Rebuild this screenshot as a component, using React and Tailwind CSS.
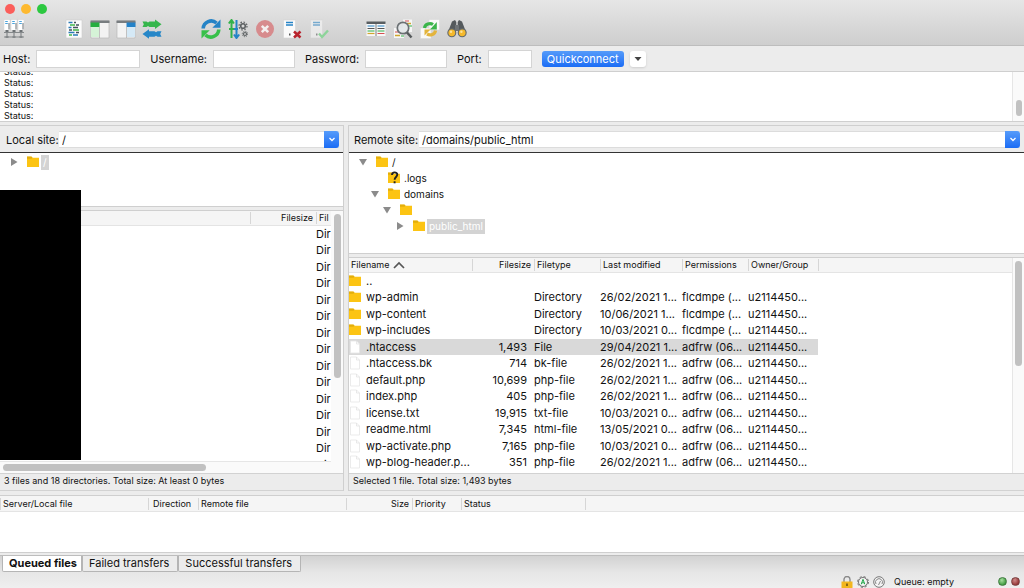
import React, { useState } from 'react';
import clsx from 'clsx';

const remoteFiles = [
  { name: '..', dir: true, size: '', type: '', modified: '', perms: '', owner: '' },
  { name: 'wp-admin', dir: true, size: '', type: 'Directory', modified: '26/02/2021 1...', perms: 'flcdmpe (...', owner: 'u2114450...' },
  { name: 'wp-content', dir: true, size: '', type: 'Directory', modified: '10/06/2021 1...', perms: 'flcdmpe (...', owner: 'u2114450...' },
  { name: 'wp-includes', dir: true, size: '', type: 'Directory', modified: '10/03/2021 0...', perms: 'flcdmpe (...', owner: 'u2114450...' },
  { name: '.htaccess', size: '1,493', type: 'File', modified: '29/04/2021 1...', perms: 'adfrw (06...', owner: 'u2114450...' },
  { name: '.htaccess.bk', size: '714', type: 'bk-file', modified: '26/02/2021 1...', perms: 'adfrw (06...', owner: 'u2114450...' },
  { name: 'default.php', size: '10,699', type: 'php-file', modified: '26/02/2021 1...', perms: 'adfrw (06...', owner: 'u2114450...' },
  { name: 'index.php', size: '405', type: 'php-file', modified: '26/02/2021 1...', perms: 'adfrw (06...', owner: 'u2114450...' },
  { name: 'license.txt', size: '19,915', type: 'txt-file', modified: '10/03/2021 0...', perms: 'adfrw (06...', owner: 'u2114450...' },
  { name: 'readme.html', size: '7,345', type: 'html-file', modified: '13/05/2021 0...', perms: 'adfrw (06...', owner: 'u2114450...' },
  { name: 'wp-activate.php', size: '7,165', type: 'php-file', modified: '10/03/2021 0...', perms: 'adfrw (06...', owner: 'u2114450...' },
  { name: 'wp-blog-header.p...', size: '351', type: 'php-file', modified: '26/02/2021 1...', perms: 'adfrw (06...', owner: 'u2114450...' },
];

const localRows = Array.from({ length: 15 }, (_, i) => i);

// --- Icons ---
const Icon = ({ children, className = 'size-5' }) => (
  <svg viewBox="0 0 20 20" className={clsx('block shrink-0', className)} fill="none" aria-hidden="true">
    {children}
  </svg>
);

const SiteManagerIcon = () => (
  <Icon>
    {[0, 7, 14].map((x) => (
      <g key={x}>
        <path d={`M${x} .5h6v11h-6z`} fill="#fff" stroke="#c8c8c8" strokeWidth=".4" />
        <path d={`M${x + 1.2} 2.500h2.600M${x + 1.2} 4.500h2.600`} stroke="#4aa3dc" strokeWidth="1.100" />
        <path d={`M${x + 5} 4v6.500`} stroke="#5c6266" strokeWidth=".9" />
        <path d={`M${x + 1.5} 11h3v2.500h-3z`} fill="#6d7275" />
      </g>
    ))}
    <path d="M0 13.500h20M0 18h20" stroke="#85898b" strokeWidth="1" />
    <path d="M3 13.500V18M10 13.500V18M17 13.500V18" stroke="#85898b" strokeWidth="1.200" />
    <path d="M1.500 17h3v2h-3zM8.500 17h3v2h-3zM15.500 17h3v2h-3z" fill="#85898b" />
  </Icon>
);

const LogIcon = () => (
  <Icon>
    <path d="M2 1h16v18H2z" fill="#fbfbfb" stroke="#cfcfcf" strokeWidth=".6" />
    <path d="M4.500 3.500h4M4.500 8.500h3M4.500 13.500h6M9 16h5" stroke="#2b7cb8" strokeWidth="1.300" />
    <path d="M6 6h5M9 11h6M5 16h3" stroke="#41b649" strokeWidth="1.300" />
    <path d="M10 3.500h2M12 6h3M9 8.500h5M5 11h3M12 13.500h3" stroke="#44525c" strokeWidth="1.300" />
  </Icon>
);

const TreeIcon = ({ remote }) => (
  <Icon>
    <path d="M1 2h18v17H1z" fill="#f3f3f3" stroke="#b9b9b9" strokeWidth=".7" />
    <path d="M.5 1.500h19v2.500H.5z" fill="#787d80" />
    {remote ? (
      <>
        <path d="M11 7h8v11h-8z" fill="#d5e9f6" />
        <path d="M10.500 3.500h9v4.500h-9z" fill="#2482c8" />
        <path d="M10.500 8v11" stroke="#aaa" strokeWidth=".7" />
      </>
    ) : (
      <>
        <path d="M1 7h8v11H1z" fill="#d5f3d7" />
        <path d="M.5 3.500h9v4.500h-9z" fill="#25ad3f" />
        <path d="M9.500 8v11" stroke="#aaa" strokeWidth=".7" />
      </>
    )}
  </Icon>
);

const TransferIcon = () => (
  <Icon>
    <path d="M.5 2.500h4l1.500 1 1.500-1h5.500V.5l6.500 4.700L13 10V8H7.500L6 7 4.500 8h-4l1.300-2.700z" fill="#36b64c" />
    <path d="M19.500 12.300h-4l-1.500 1-1.500-1H7v-2L.5 15 7 19.800v-2h5.500l1.500-1 1.500 1h4L18.200 15z" fill="#2787c8" />
  </Icon>
);

const RefreshIcon = () => (
  <Icon>
    <path d="M2.200 9.500A8 8 0 0 1 15.500 4" stroke="#2583c6" strokeWidth="3.600" />
    <path d="M19.500.5v8.200h-8.200z" fill="#2583c6" />
    <path d="M17.800 10.500A8 8 0 0 1 4.500 16" stroke="#38c04a" strokeWidth="3.600" />
    <path d="M.5 19.500v-8.200h8.200z" fill="#38c04a" />
  </Icon>
);

const ProcessIcon = () => (
  <Icon>
    <path d="M3.500 1v18M.8 4.500 3.500 1l2.400 3.500M1 10h5" stroke="#33b24a" strokeWidth="2" />
    <path d="M8.500 1v18M6 15.500 8.500 19l2.700-3.500M6 10h4" stroke="#2583c6" strokeWidth="2" />
    <circle cx="15" cy="7" r="2.300" stroke="#5d6163" strokeWidth="1.600" />
    <circle cx="15" cy="7" r="4" stroke="#5d6163" strokeWidth="1.200" strokeDasharray="1.600 1.540" />
    <circle cx="17" cy="15" r="1.500" stroke="#5d6163" strokeWidth="1.200" />
    <circle cx="17" cy="15" r="2.700" stroke="#5d6163" strokeWidth="1" strokeDasharray="1.100 1.020" />
  </Icon>
);

const CancelIcon = () => (
  <Icon>
    <circle cx="10" cy="10" r="9" fill="#d78b8d" />
    <path d="m6.800 6.800 6.400 6.400m0-6.400-6.400 6.400" stroke="#f3eeee" strokeWidth="2.600" />
  </Icon>
);

const ServerIcon = ({ ok }) => (
  <Icon>
    <g opacity={ok ? 0.55 : 1}>
      <path d="M1.500 1h12v18h-12z" fill="#fafafa" stroke="#d5d5d5" strokeWidth=".6" />
      <path d="M4 3.500h7M4 6h7" stroke="#2583c6" strokeWidth="1.300" />
      <path d="M7 14.500h1.500v2H7z" fill="#555" />
    </g>
    {ok ? (
      <path d="m10 14.500 3 3.500 6-6.500" stroke="#8dd49a" strokeWidth="2.400" />
    ) : (
      <path d="m12 12.500 6.500 6m0-6-6.500 6" stroke="#b8222c" strokeWidth="2.500" />
    )}
  </Icon>
);

const FilterIcon = () => (
  <Icon>
    <path d="M.5 4h19v13H.5z" fill="#f8f8f8" />
    <path d="M.5 2.500h19V5H.5z" fill="#595e61" />
    <path d="M1.500 7h7M11.500 7h7" stroke="#2583c6" strokeWidth="1" />
    <path d="M1.500 9.500h7M11.500 9.500h7" stroke="#555" strokeWidth="1" />
    <path d="M1.500 12h7M11.500 12h7" stroke="#33b24a" strokeWidth="1.200" />
    <path d="M1.500 14.500h7" stroke="#d0a72d" strokeWidth="1.200" />
    <path d="M11.500 14.500h7" stroke="#d85050" strokeWidth="1" />
    <path d="M10 4v13" stroke="#595e61" strokeWidth=".8" />
  </Icon>
);

const CompareIcon = () => (
  <Icon>
    <path d="M10 .5h9V13h-9zM1 9h10v10H1z" fill="#f6f6f6" />
    <path d="M12 2h4M2 13h4" stroke="#d85050" strokeWidth="1.200" />
    <path d="M14 4.500h4M2 16.500h5" stroke="#d0a72d" strokeWidth="1.400" />
    <path d="M16 7h3M8 17h3" stroke="#33b24a" strokeWidth="1.200" />
    <circle cx="10" cy="9" r="5.700" fill="#e3e7e9" fillOpacity=".9" stroke="#6b7073" strokeWidth="1.700" />
    <path d="m14 13.500 4.500 5" stroke="#55595b" strokeWidth="2.500" />
  </Icon>
);

const SyncIcon = () => (
  <Icon>
    <path d="M9 .5h10.500V11H9zM.5 9H11v10.500H.5z" fill="#f9f9f9" stroke="#d6d6d6" strokeWidth=".5" />
    <path d="M4.500 9C5 5 10 3.500 13 5.500" stroke="#3bb54a" strokeWidth="3.200" />
    <path d="M16.800 3v7.500H10z" fill="#3bb54a" />
    <path d="M15.500 11.500c-.5 4-5 5.500-8.500 3.500" stroke="#e3b43c" strokeWidth="3.200" />
    <path d="M4.500 16.500V10.500h6z" fill="#e3b43c" />
  </Icon>
);

const FindIcon = () => (
  <Icon>
    <path d="M5 2.500 8 1l1.300 2v8L1 13zM15 2.500 12 1l-1.300 2v8l8.300 2z" fill="#54595c" />
    <path d="M8 6h4v6H8z" fill="#6e7376" />
    <circle cx="4.800" cy="13.800" r="4.500" fill="#63686b" />
    <circle cx="15.200" cy="13.800" r="4.500" fill="#63686b" />
    <circle cx="4.800" cy="13.800" r="3.400" fill="#f5b92c" />
    <circle cx="15.200" cy="13.800" r="3.400" fill="#f5b92c" />
    <circle cx="4" cy="12.800" r="1.200" fill="#fde29a" />
    <circle cx="14.400" cy="12.800" r="1.200" fill="#fde29a" />
  </Icon>
);

const FolderIcon = ({ question }) => (
  <svg viewBox="0 0 12 12" className="block size-3 shrink-0 overflow-visible" aria-hidden="true">
    <path d="M0 .8h4.500l1 1H12V11H0z" fill="#fcc413" />
    <path d="M0 .5h4.500l1 1.300-1 .9H0z" fill="#e3ae0c" />
    {question && (
      <g fill="none" stroke="#222" strokeWidth="1.900">
        <path d="M4 3C4-.4 9.300-.4 9.300 2.600 9.300 5 6.600 5 6.600 7.800" />
        <path d="M6.600 9.300v2" />
      </g>
    )}
  </svg>
);

const FileIcon = () => (
  <svg viewBox="0 0 12 14" className="block h-3.5 w-3 shrink-0" aria-hidden="true">
    <path d="M1.500 1h6l3 3v9h-9z" fill="#fff" stroke="#e6e6e6" strokeWidth=".8" />
    <path d="M7.500 1v3h3" fill="none" stroke="#e0e0e0" strokeWidth=".7" />
  </svg>
);

const Triangle = ({ open }) => (
  <svg viewBox="0 0 8 8" className="block size-2 shrink-0" aria-hidden="true">
    <path d={open ? 'M0 1h8L4 7.500z' : 'M1 0v8l6.500-4z'} fill="#8b8b8b" />
  </svg>
);

// --- Toolbar ---
const toolGroups = [
  {
    className: 'ml-[34px]',
    width: 'w-[26px]',
    tools: [
      ['Toggle message log', <LogIcon />],
      ['Toggle local tree', <TreeIcon />],
      ['Toggle remote tree', <TreeIcon remote />],
      ['Toggle transfer queue', <TransferIcon />],
    ],
  },
  {
    className: 'ml-8',
    width: 'w-[27px]',
    tools: [
      ['Refresh', <RefreshIcon />],
      ['Process queue', <ProcessIcon />],
      ['Cancel', <CancelIcon />],
      ['Disconnect', <ServerIcon />],
      ['Reconnect', <ServerIcon ok />],
    ],
  },
  {
    className: 'ml-[30px]',
    width: 'w-[27px]',
    tools: [
      ['Filter', <FilterIcon />],
      ['Compare directories', <CompareIcon />],
      ['Synchronized browsing', <SyncIcon />],
      ['Find files', <FindIcon />],
    ],
  },
];

const Toolbar = () => (
  <header className="shrink-0 h-[46px] bg-linear-to-b from-[#e6e6e6] to-[#cecece] border-b border-[#bdbdbd]">
    <div className="flex h-[17px] items-center gap-1.5 pl-[5px]">
      <button aria-label="Close" className="size-2.5 rounded-full bg-[#fb5e5b]" />
      <button aria-label="Minimize" className="size-2.5 rounded-full bg-[#fdb930]" />
      <button aria-label="Zoom" className="size-2.5 rounded-full bg-[#2cc840]" />
    </div>
    <div className="flex h-6 items-center">
      <button aria-label="Site manager" className="flex w-[26px] justify-center ml-px">
        <SiteManagerIcon />
      </button>
      {toolGroups.map((group) => (
        <div key={group.className} className={clsx('flex', group.className)}>
          {group.tools.map(([label, icon]) => (
            <button key={label} aria-label={label} className={clsx('flex justify-center', group.width)}>
              {icon}
            </button>
          ))}
        </div>
      ))}
    </div>
  </header>
);

const QuickField = ({ id, label, type = 'text', width }) => (
  <div className="flex items-center">
    <label htmlFor={id}>{label}</label>
    <input id={id} type={type} className={clsx('ml-1.5 h-[18px] bg-white border border-[#d4d4d4] px-1 outline-none', width)} />
  </div>
);

const QuickConnect = () => (
  <form className="flex shrink-0 h-[26px] items-center gap-2.5 bg-[#ececec] border-b border-[#cfcfcf] pl-[3px]" onSubmit={(e) => e.preventDefault()}>
    <QuickField id="host" label="Host:" width="w-[104px]" />
    <QuickField id="user" label="Username:" width="w-[82px]" />
    <QuickField id="pass" label="Password:" type="password" width="w-[82px]" />
    <QuickField id="port" label="Port:" width="w-11" />
    <div className="flex items-center gap-1.5">
      <button className="h-4 w-[82px] rounded-[3px] bg-linear-to-b from-[#559bfa] to-[#1a6cf5] text-white">
        Quickconnect
      </button>
      <button aria-label="Recent servers" className="flex size-4 items-center justify-center rounded-[3px] bg-white shadow-sm">
        <svg viewBox="0 0 8 4" className="h-1 w-2" aria-hidden="true">
          <path d="M.5 0h7L4 4z" fill="#444" />
        </svg>
      </button>
    </div>
  </form>
);

const MessageLog = () => (
  <section className="flex shrink-0 h-[50px] bg-white border-b border-[#cfcfcf]">
    <div className="flex flex-1 flex-col justify-end overflow-hidden pl-1 text-[9px] leading-[11px]">
      {[0, 1, 2, 3, 4].map((i) => (
        <div key={i} className="shrink-0">Status:</div>
      ))}
    </div>
    <div className="flex w-3 items-end justify-center border-l border-[#e6e6e6] bg-[#fafafa] pb-[5px]">
      <div className="h-4 w-1.5 rounded-full bg-[#c1c1c1]" />
    </div>
  </section>
);

// --- Panes ---
const SiteBar = ({ id, label, value, className }) => (
  <div className={clsx('flex shrink-0 h-7 items-center border-t border-t-[#cfcfcf] border-b border-b-[#333] bg-[#ececec] pt-px', className)}>
    <label htmlFor={id} className="whitespace-nowrap">{label}</label>
    <div className="relative flex-1">
      <select id={id} defaultValue={value} className="block h-[17px] w-full appearance-none border-y border-[#dcdcdc] bg-white pl-[3px] outline-none">
        <option>{value}</option>
      </select>
      <span className="pointer-events-none absolute inset-y-0 right-0 flex w-[15px] items-center justify-center rounded-r-[3px] bg-linear-to-b from-[#559bfa] to-[#1a6cf5]">
        <svg viewBox="0 0 8 5" className="h-[5px] w-2" fill="none" aria-hidden="true">
          <path d="m1.500 1 2.500 2.500L6.500 1" stroke="#fff" strokeWidth="1.300" />
        </svg>
      </span>
    </div>
  </div>
);

const TreeNode = ({ label, indent, open, leaf, question, selected }) => (
  <li className={clsx('flex h-4 items-center', indent)}>
    <button aria-label="Toggle folder" className="w-2">{!leaf && <Triangle open={open} />}</button>
    <span className="ml-[9px]"><FolderIcon question={question} /></span>
    <span className={clsx('ml-0.5 h-[15px] px-0.5 leading-[15px]', selected && 'bg-[#d3d3d3] text-white')}>{label}</span>
  </li>
);

const LocalPane = () => (
  <section className="flex min-h-0 min-w-0 flex-col border-r border-[#cfcfcf]">
    <SiteBar id="local-site" label="Local site:" value="/" className="pl-1.5 pr-1 [&>label]:w-[53px]" />
    <ul className="h-[54px] shrink-0 border-b border-[#cfcfcf] bg-white pt-px text-[10px]">
      <TreeNode label="/" indent="pl-2.5" selected />
    </ul>
    <div className="h-[3px] shrink-0" />
    <div className="relative flex min-h-0 flex-1 border-t border-[#cfcfcf] bg-white">
      <div className="flex min-w-0 flex-1 flex-col">
        <div className="min-h-0 flex-1 overflow-hidden">
          <table className="w-full table-fixed">
            <colgroup>
              <col />
              <col className="w-[66px]" />
              <col className="w-[15px]" />
            </colgroup>
            <thead className="bg-[#f5f5f5] text-[9px]">
              <tr className="h-3.5 [&>th]:border-b [&>th]:border-[#e4e4e4] [&>th]:p-0 [&>th]:pt-px [&>th]:font-normal">
                <th></th>
                <th className="text-right"><span className="block border-l border-[#d6d6d6] pr-[3px] leading-3">Filesize</span></th>
                <th className="overflow-hidden text-left"><span className="block border-l border-[#d6d6d6] pl-0.5 leading-3">Fil</span></th>
              </tr>
            </thead>
            <tbody>
              {localRows.map((row) => (
                <tr key={row} className="odd:h-4 even:h-[17px] [&>td]:p-0 [&>td]:leading-4">
                  <td></td>
                  <td></td>
                  <td>Dir</td>
                </tr>
              ))}
            </tbody>
          </table>
        </div>
        <div className="h-3 shrink-0 border-t border-[#e6e6e6] bg-[#fafafa] pl-[3px] pt-0.5">
          <div className="h-[7px] w-[62%] rounded-full bg-[#c1c1c1]" />
        </div>
      </div>
      <div className="flex w-3 shrink-0 justify-center bg-[#fafafa] pt-[3px]">
        <div className="h-[164px] w-[7px] rounded-full bg-[#c1c1c1]" />
      </div>
      {/* masked part of the list */}
      <div className="absolute -top-[21px] bottom-[13px] left-0 w-[81px] bg-black" />
    </div>
    <p className="h-[18px] shrink-0 border-y border-[#d2d2d2] pl-1 text-[9px] leading-3.5">
      3 files and 18 directories. Total size: At least 0 bytes
    </p>
  </section>
);

const columns = ['Last modified', 'Permissions', 'Owner/Group'];

const RemotePane = () => {
  const [selected, setSelected] = useState('.htaccess');

  return (
    <section className="flex min-h-0 min-w-0 flex-col border-l border-[#cfcfcf]">
      <SiteBar id="remote-site" label="Remote site:" value="/domains/public_html" className="pl-[5px] pr-1 [&>label]:w-[65px]" />
      <ul className="h-[101px] shrink-0 border-b border-[#cfcfcf] bg-white pt-px text-[10px]">
        <TreeNode label="/" indent="pl-2.5" open />
        <TreeNode label=".logs" indent="pl-[22px]" leaf question />
        <TreeNode label="domains" indent="pl-[22px]" open />
        <TreeNode label="" indent="pl-[34px]" open />
        <TreeNode label="public_html" indent="pl-[47px]" selected />
      </ul>
      <div className="h-[3px] shrink-0" />
      <div className="flex min-h-0 flex-1 border-t border-[#cfcfcf] bg-white">
        <div className="min-w-0 flex-1 overflow-hidden">
          <table className="w-full table-fixed whitespace-nowrap">
            <colgroup>
              <col className="w-[123px]" />
              <col className="w-[62px]" />
              <col className="w-[66px]" />
              <col className="w-[82px]" />
              <col className="w-[66px]" />
              <col className="w-[70px]" />
              <col />
            </colgroup>
            <thead className="bg-[#f5f5f5] text-[9px]">
              <tr className="h-3.5 text-left [&>th]:border-b [&>th]:border-[#e4e4e4] [&>th]:p-0 [&>th]:pt-px [&>th]:font-normal">
                <th>
                  <span className="flex items-center gap-1 pl-0.5 leading-3">
                    Filename
                    <svg viewBox="0 0 12 8" className="h-2 w-3" fill="none" aria-hidden="true">
                      <path d="m1 7 5-5 5 5" stroke="#555" strokeWidth="1.700" />
                    </svg>
                  </span>
                </th>
                <th><span className="block border-l border-[#d6d6d6] pr-[3px] text-right leading-3">Filesize</span></th>
                <th><span className="block border-l border-[#d6d6d6] pl-0.5 leading-3">Filetype</span></th>
                {columns.map((column) => (
                  <th key={column}><span className="block border-l border-[#d6d6d6] pl-0.5 leading-3">{column}</span></th>
                ))}
                <th><span className="block h-3 border-l border-[#d6d6d6]" /></th>
              </tr>
            </thead>
            <tbody>
              {remoteFiles.map((file) => (
                <tr
                  key={file.name}
                  onClick={() => setSelected(file.name)}
                  className={clsx(
                    'odd:h-4 even:h-[17px] [&>td]:p-0 [&>td]:leading-4',
                    selected === file.name && '[&>td:not(:last-child)]:bg-[#d9d9d9]'
                  )}
                >
                  <td>
                    <span className="flex items-center gap-[5px]">
                      {file.dir ? <FolderIcon /> : <FileIcon />}
                      {file.name}
                    </span>
                  </td>
                  <td className="text-right"><span className="pr-[7px]">{file.size}</span></td>
                  <td>{file.type}</td>
                  <td>{file.modified}</td>
                  <td>{file.perms}</td>
                  <td>{file.owner}</td>
                  <td></td>
                </tr>
              ))}
            </tbody>
          </table>
        </div>
        <div className="flex w-3 shrink-0 justify-center border-l border-[#e6e6e6] bg-[#fafafa] pt-[3px]">
          <div className="h-[105px] w-[7px] rounded-full bg-[#c1c1c1]" />
        </div>
      </div>
      <p className="h-[18px] shrink-0 border-y border-[#d2d2d2] pl-1 text-[9px] leading-3.5">
        Selected 1 file. Total size: 1,493 bytes
      </p>
    </section>
  );
};

// --- Queue ---
const tabs = ['Queued files', 'Failed transfers', 'Successful transfers'];

const TransferQueue = () => {
  const [active, setActive] = useState(tabs[0]);

  return (
    <section className="shrink-0">
      <div className="h-[58px] border-y border-[#cfcfcf] bg-white">
        <table className="w-full table-fixed text-[9px]">
          <colgroup>
            <col className="w-[148px]" />
            <col className="w-[50px]" />
            <col className="w-[148px]" />
            <col className="w-[66px]" />
            <col className="w-[49px]" />
            <col className="w-[124px]" />
            <col />
          </colgroup>
          <thead className="bg-[#f5f5f5]">
            <tr className="h-[15px] text-left [&>th]:border-b [&>th]:border-[#e4e4e4] [&>th]:p-0 [&>th]:pt-px [&>th]:font-normal [&_span]:block [&_span]:border-l [&_span]:border-[#d6d6d6] [&_span]:pl-0.5 [&_span]:leading-3">
              <th><span>Server/Local file</span></th>
              <th><span><i className="block pl-0.5 not-italic">Direction</i></span></th>
              <th><span>Remote file</span></th>
              <th className="text-right"><span className="pr-[3px]">Size</span></th>
              <th><span>Priority</span></th>
              <th><span>Status</span></th>
              <th><span className="h-3" /></th>
            </tr>
          </thead>
        </table>
      </div>
      <div className="border-t-2 border-[#ececec]">
        <div className="flex border-t border-[#bdbdbd] bg-linear-to-b from-[#d2d2d2] to-[#e6e6e6] pl-0.5">
          {tabs.map((tab) => (
            <button
              key={tab}
              onClick={() => setActive(tab)}
              className={clsx(
                'h-4 rounded-b-[2px] border border-t-0 border-[#b5b5b5] pl-1.5 text-left whitespace-nowrap leading-[15px]',
                active === tab ? 'bg-white pr-1 font-bold' : 'bg-[#ececec] pr-2'
              )}
            >
              {tab}
            </button>
          ))}
        </div>
      </div>
    </section>
  );
};

const StatusBar = () => (
  <footer className="flex h-4 shrink-0 items-end justify-end bg-linear-to-b from-[#e6e6e6] to-[#efefef] text-[9px]">
    <svg viewBox="0 0 12 12" className="size-3" aria-hidden="true">
      <path d="M3 6V3.500a3 3 0 0 1 6 0V6" fill="none" stroke="#8a8a8a" strokeWidth="1.400" />
      <path d="M.5 5.500h11V12H.5z" fill="#f3b61f" />
      <path d="M5.300 7.500h1.400V10H5.300z" fill="#5c4810" />
    </svg>
    <svg viewBox="0 0 12 12" className="ml-1 size-3" fill="none" aria-hidden="true">
      <circle cx="6" cy="6" r="4.500" fill="#f5f5f5" stroke="#666" strokeWidth=".9" />
      <circle cx="6" cy="6" r="5.400" stroke="#666" strokeWidth="1" strokeDasharray="2.200 2.040" />
      <path d="m4.200 8.300 1.800-5 1.800 5M4.900 6.800h2.200" stroke="#22a84a" strokeWidth="1" />
    </svg>
    <svg viewBox="0 0 12 12" className="ml-1 size-3" fill="none" aria-hidden="true">
      <circle cx="6" cy="6" r="5.300" fill="#f3f3f3" stroke="#777" strokeWidth="1" />
      <path d="M3 8a3.500 3.500 0 1 1 6 0M5.500 9l2-4" stroke="#888" strokeWidth="1" />
    </svg>
    <span className="ml-[9px] w-[104px] leading-[13px]">Queue: empty</span>
    <span className="mb-0.5 size-[9px] rounded-full border border-[#3f7a3f] bg-radial-[at_40%_30%] from-[#a8e0a0] to-[#16801a]" />
    <span className="mr-1 mb-0.5 ml-1 size-[9px] rounded-full border border-[#7a3f3f] bg-radial-[at_40%_30%] from-[#cf8a8a] to-[#7d1616]" />
  </footer>
);

export default function App() {
  return (
    <div className="flex h-screen flex-col overflow-hidden bg-[#ececec] font-['Inter','Liberation_Sans',sans-serif] text-[11px] leading-4 text-[#111]">
      <Toolbar />
      <QuickConnect />
      <MessageLog />
      <main className="mt-[3px] mb-1 grid min-h-0 flex-1 grid-cols-[344fr_676fr] grid-rows-[minmax(0,1fr)] gap-1">
        <LocalPane />
        <RemotePane />
      </main>
      <TransferQueue />
      <StatusBar />
    </div>
  );
}
